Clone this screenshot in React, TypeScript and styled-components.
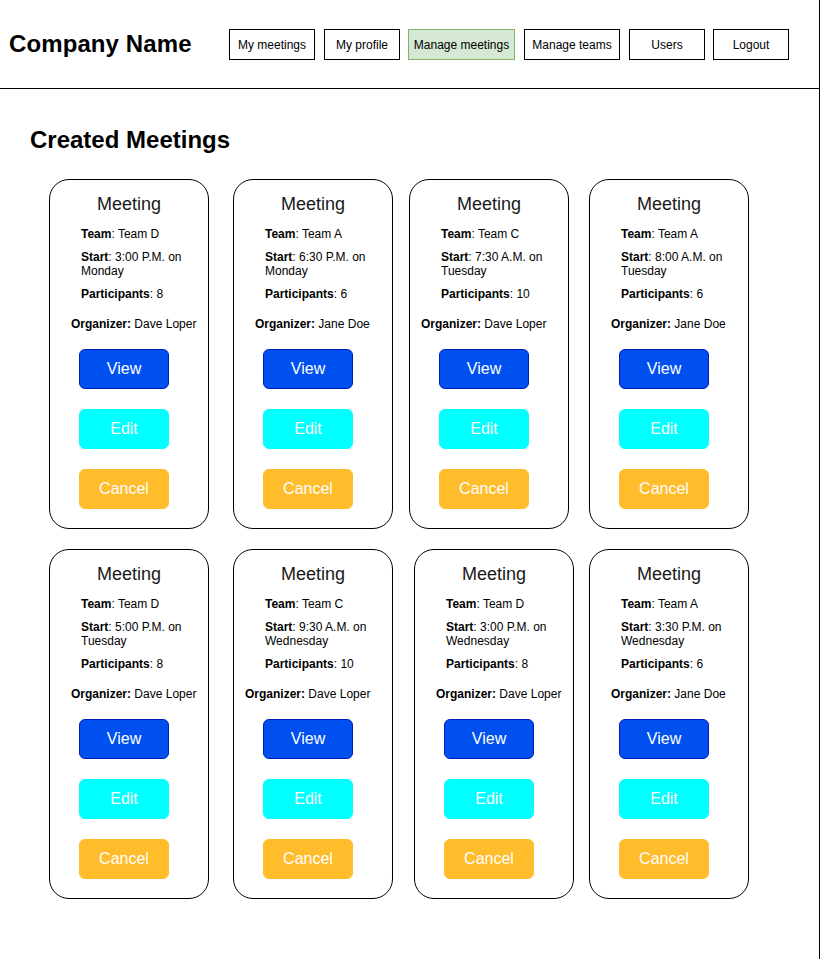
import React from "react";
import styled, { createGlobalStyle } from "styled-components";

const Global = createGlobalStyle`
  html, body { margin: 0; padding: 0; background: #fff; }
  body { font-family: "Liberation Sans", Arial, Helvetica, sans-serif; color: #000; }
`;

const Page = styled.div`
  width: 819px;
  height: 959px;
  border-right: 1px solid #000;
  box-sizing: content-box;
  overflow: hidden;
`;

const Header = styled.header`
  height: 89px;
  border-bottom: 1px solid #000;
  display: flex;
  align-items: flex-start;
  box-sizing: border-box;
`;

const Brand = styled.div`
  font-size: 24px;
  font-weight: bold;
  line-height: 28px;
  margin: 30px 0 0 9px;
  width: 220px;
  letter-spacing: 0.1px;
`;

const Nav = styled.nav`
  display: flex;
  margin-top: 29px;
`;

const NavButton = styled.div<{ $w: number; $gap: number; $active?: boolean }>`
  width: ${(p) => p.$w}px;
  height: 31px;
  margin-left: ${(p) => p.$gap}px;
  box-sizing: border-box;
  border: 1px solid ${(p) => (p.$active ? "#82b366" : "#000")};
  background: ${(p) => (p.$active ? "#d5e8d4" : "#fff")};
  font-size: 12px;
  display: flex;
  align-items: center;
  justify-content: center;
  white-space: nowrap;
`;

const Main = styled.main`
  padding-left: 30px;
`;

const SectionTitle = styled.h1`
  font-size: 24px;
  font-weight: bold;
  line-height: 28px;
  margin: 37px 0 0 0;
`;

const Row = styled.div<{ $top: number }>`
  display: flex;
  margin-top: ${(p) => p.$top}px;
`;

const Card = styled.div<{ $left: number }>`
  width: 160px;
  height: 350px;
  box-sizing: border-box;
  border: 1px solid #000;
  border-radius: 20px;
  margin-left: ${(p) => p.$left}px;
  display: flex;
  flex-direction: column;
`;

const CardTitle = styled.div`
  font-size: 18px;
  line-height: 20px;
  margin-top: 14px;
  text-align: center;
  color: #1a1a1a;
`;

const Info = styled.div<{ $top: number }>`
  font-size: 12px;
  line-height: 14px;
  margin: ${(p) => p.$top}px 0 0 31px;
  width: 106px;
`;

const Label = styled.span`
  font-weight: bold;
`;

const Organizer = styled.div<{ $left: number }>`
  font-size: 12px;
  line-height: 14px;
  margin: 16px 0 0 ${(p) => p.$left}px;
  white-space: nowrap;
`;

const Action = styled.div<{ $bg: string; $border: string; $top: number }>`
  width: 90px;
  height: 40px;
  box-sizing: border-box;
  margin: ${(p) => p.$top}px 0 0 29px;
  background: ${(p) => p.$bg};
  border: 1px solid ${(p) => p.$border};
  border-radius: 6px;
  color: #fff;
  font-size: 16px;
  display: flex;
  align-items: center;
  justify-content: center;
`;

type Meeting = { team: string; start: string; parts: number; org: string; left: number; orgLeft: number };

const rows: Meeting[][] = [
  [
    { team: "Team D", start: "3:00 P.M. on Monday", parts: 8, org: "Dave Loper", left: 19, orgLeft: 21 },
    { team: "Team A", start: "6:30 P.M. on Monday", parts: 6, org: "Jane Doe", left: 24, orgLeft: 21 },
    { team: "Team C", start: "7:30 A.M. on Tuesday", parts: 10, org: "Dave Loper", left: 16, orgLeft: 11 },
    { team: "Team A", start: "8:00 A.M. on Tuesday", parts: 6, org: "Jane Doe", left: 20, orgLeft: 21 },
  ],
  [
    { team: "Team D", start: "5:00 P.M. on Tuesday", parts: 8, org: "Dave Loper", left: 19, orgLeft: 21 },
    { team: "Team C", start: "9:30 A.M. on Wednesday", parts: 10, org: "Dave Loper", left: 24, orgLeft: 11 },
    { team: "Team D", start: "3:00 P.M. on Wednesday", parts: 8, org: "Dave Loper", left: 21, orgLeft: 21 },
    { team: "Team A", start: "3:30 P.M. on Wednesday", parts: 6, org: "Jane Doe", left: 15, orgLeft: 21 },
  ],
];

const nav = [
  { label: "My meetings", w: 86, gap: 0 },
  { label: "My profile", w: 76, gap: 9 },
  { label: "Manage meetings", w: 107, gap: 8, active: true },
  { label: "Manage teams", w: 96, gap: 9 },
  { label: "Users", w: 76, gap: 9 },
  { label: "Logout", w: 76, gap: 8 },
];

export default function App() {
  return (
    <Page>
      <Global />
      <Header>
        <Brand>Company Name</Brand>
        <Nav>
          {nav.map((n) => (
            <NavButton key={n.label} $w={n.w} $gap={n.gap} $active={n.active}>
              {n.label}
            </NavButton>
          ))}
        </Nav>
      </Header>
      <Main>
        <SectionTitle>Created Meetings</SectionTitle>
        {rows.map((r, i) => (
          <Row key={i} $top={i === 0 ? 25 : 20}>
            {r.map((m, j) => (
              <Card key={j} $left={m.left}>
                <CardTitle>Meeting</CardTitle>
                <Info $top={13}>
                  <Label>Team</Label>: {m.team}
                </Info>
                <Info $top={9}>
                  <Label>Start</Label>: {m.start}
                </Info>
                <Info $top={9}>
                  <Label>Participants</Label>: {m.parts}
                </Info>
                <Organizer $left={m.orgLeft}>
                  <Label>Organizer:</Label> {m.org}
                </Organizer>
                <Action $bg="#0050ef" $border="#001dbc" $top={18}>View</Action>
                <Action $bg="#00ffff" $border="#00ffff" $top={20}>Edit</Action>
                <Action $bg="#ffbc2b" $border="#ffbc2b" $top={20}>Cancel</Action>
              </Card>
            ))}
          </Row>
        ))}
      </Main>
    </Page>
  );
}
